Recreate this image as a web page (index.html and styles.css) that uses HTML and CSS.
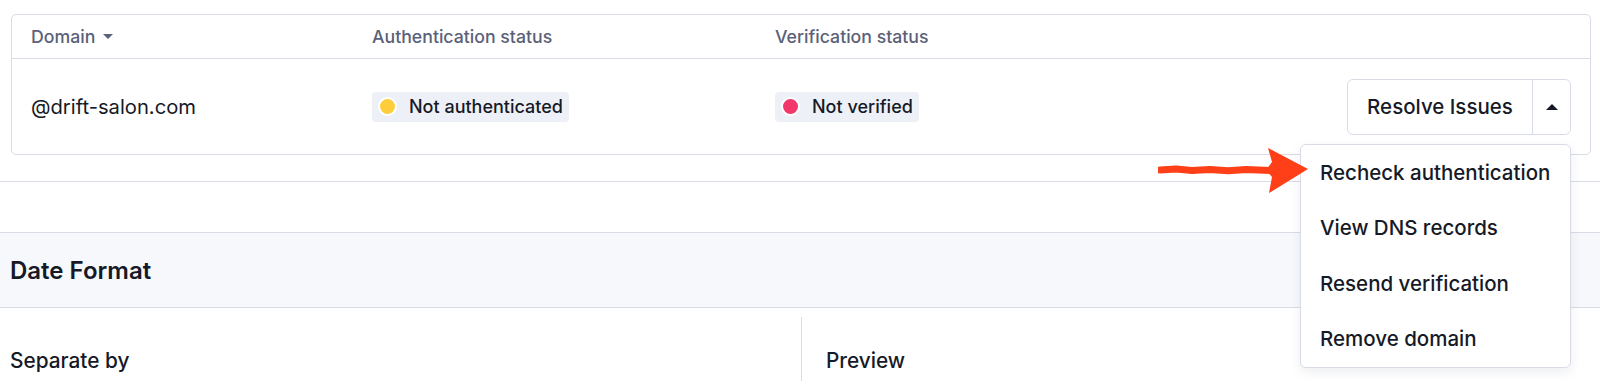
FILE: index.html
```html
<!DOCTYPE html>
<html lang="en">
<head>
<meta charset="utf-8">
<title>Domains</title>
<link rel="stylesheet" href="styles.css">
</head>
<body>
<div class="page">
  <div class="domains">
    <div class="card">
      <div class="row head">
        <div class="cell">Domain <span class="sort-caret"></span></div>
        <div class="cell">Authentication status</div>
        <div class="cell">Verification status</div>
        <div class="cell"></div>
      </div>
      <div class="row body">
        <div class="cell domain">@drift-salon.com</div>
        <div class="cell"><span class="pill"><span class="dot yellow"></span>Not authenticated</span></div>
        <div class="cell"><span class="pill"><span class="dot red"></span>Not verified</span></div>
        <div class="cell actions">
          <div class="split">
            <button class="split-main">Resolve Issues</button>
            <button class="split-toggle"><span class="up-caret"></span></button>
            <div class="menu">
              <div class="menu-item">Recheck authentication</div>
              <div class="menu-item">View DNS records</div>
              <div class="menu-item">Resend verification</div>
              <div class="menu-item">Remove domain</div>
            </div>
            <svg class="annot-arrow" width="156" height="48" viewBox="0 0 156 48">
              <path d="M2 23 L18 22 L34 23.6 L52 22.4 L70 23.8 L88 22.6 L112 23.4" stroke="#ff3f17" stroke-width="7" stroke-linecap="round" stroke-linejoin="round" fill="none"/>
              <path d="M110 1 L150 22 L111 46 L114 30 L108 23 L114 15 Z" fill="#ff3f17"/>
            </svg>
          </div>
        </div>
      </div>
    </div>
  </div>
  <div class="gap"></div>
  <div class="section-head">Date Format</div>
  <div class="date-body">
    <div class="col left"><div class="label">Separate by</div></div>
    <div class="col right"><div class="label">Preview</div></div>
  </div>
</div>
</body>
</html>
```

FILE: styles.css
```css
* { box-sizing: border-box; }
html, body { margin: 0; padding: 0; background: #fff; }
body {
  font-family: "Inter", "Roboto", "Liberation Sans", sans-serif;
  color: #161a27;
  width: 1600px;
  height: 381px;
  overflow: hidden;
}
.domains {
  padding: 14px 9px 26px 11px;
  border-bottom: 1px solid #d9dce7;
}
.card {
  border: 1px solid #d9dce7;
  border-radius: 5px;
}
.row {
  display: grid;
  grid-template-columns: 341px 403px 1fr auto;
  align-items: center;
  padding: 0 19px 0 19px;
}
.row.head {
  height: 44px;
  border-bottom: 1px solid #d9dce7;
  font-size: 17.7px;
  font-weight: 500;
  color: #5a6178;
}
.row.head .cell { display: flex; align-items: center; }
.sort-caret {
  display: inline-block;
  width: 0; height: 0;
  margin-left: 8px;
  border-left: 5px solid transparent;
  border-right: 5px solid transparent;
  border-top: 5px solid #5a6178;
}
.row.body { height: 95px; }
.domain { font-size: 20.2px; }
.pill {
  display: inline-flex;
  align-items: center;
  height: 30px;
  padding: 0 6px 0 6px;
  background: #eef0f7;
  border-radius: 4px;
  font-size: 18px;
  font-weight: 500;
}
.dot {
  width: 19px; height: 19px;
  border-radius: 50%;
  border: 2px solid #fff;
  margin-right: 12px;
}
.dot.yellow { background: #fdcd3b; }
.dot.red { background: #f2386a; }
.actions { display: flex; justify-content: flex-end; }
.split {
  position: relative;
  display: flex;
  height: 56px;
  border: 1px solid #d9dce7;
  border-radius: 6px;
}
.split button {
  background: #fff;
  border: 0;
  font-family: inherit;
  color: #161a27;
  cursor: pointer;
  border-radius: 6px;
}
.split-main {
  width: 185px;
  font-size: 20.5px;
  font-weight: 500;
  border-right: 1px solid #d9dce7 !important;
  border-radius: 6px 0 0 6px !important;
}
.split-toggle {
  width: 37px;
  display: flex;
  align-items: center;
  justify-content: center;
}
.up-caret {
  width: 0; height: 0;
  border-left: 6px solid transparent;
  border-right: 6px solid transparent;
  border-bottom: 6px solid #161a27;
}
.menu {
  position: absolute;
  top: 64px;
  right: -1px;
  width: 271px;
  padding: 0;
  background: #fff;
  border: 1px solid #d9dce7;
  border-radius: 6px;
  box-shadow: 0 4px 12px rgba(30, 40, 80, 0.08);
  z-index: 5;
}
.menu-item {
  height: 55.5px;
  display: flex;
  align-items: center;
  padding-left: 19px;
  font-size: 20.5px;
  font-weight: 500;
}
.annot-arrow {
  position: absolute;
  left: -190px;
  top: 67px;
  z-index: 6;
}
.gap { height: 50px; }
.section-head {
  height: 76px;
  border-top: 1px solid #d9dce7;
  border-bottom: 1px solid #d9dce7;
  background: #f7f8fc;
  display: flex;
  align-items: center;
  padding-left: 10px;
  font-size: 24px;
  font-weight: 600;
}
.date-body {
  display: grid;
  grid-template-columns: 801px 1fr;
}
.col { padding-top: 40px; }
.col.left { padding-left: 10px; }
.col.right {
  margin-top: 9px;
  padding-top: 31px;
  border-left: 1px solid #d9dce7;
  padding-left: 24px;
  height: 80px;
}
.label { font-size: 20.8px; font-weight: 500; }
```
